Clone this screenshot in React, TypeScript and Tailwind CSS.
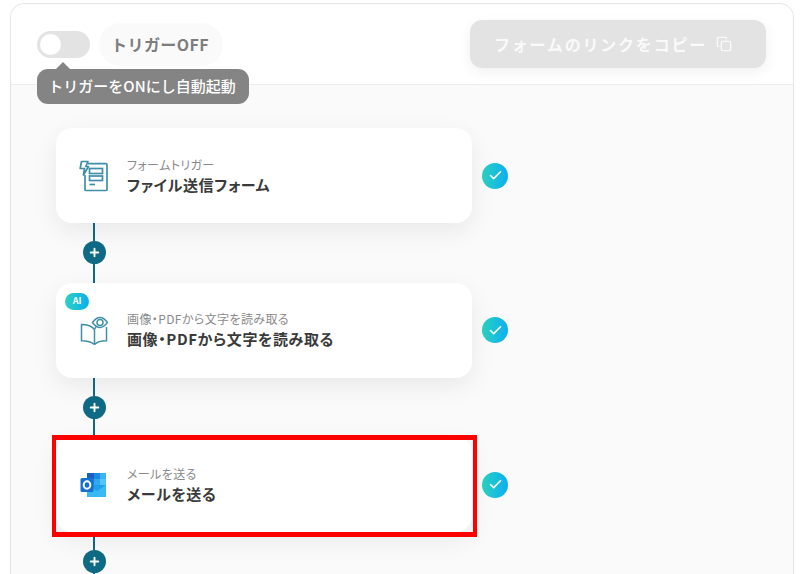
import { Check, Copy, Plus } from "lucide-react";
import type { ReactNode } from "react";

const font = { fontFamily: '"Noto Sans CJK JP", "Noto Sans", sans-serif' };

function FormIcon() {
  return (
    <svg width="30" height="32" viewBox="0 0 30 32" fill="none" stroke="#3f8fa8" strokeWidth="1.700">
      <path d="M9 3.700H27a1 1 0 0 1 1 1V29.500a1 1 0 0 1-1 1H7a1 1 0 0 1-1-1V15" />
      <rect x="10.500" y="8.500" width="13" height="5" />
      <rect x="10.500" y="16" width="13" height="4.500" />
      <path d="M10.500 24.500h5.500" />
      <path d="M2.500 1.500h6.500L6.800 6.500H9.500L4.500 15l1-6.500H1.200z" strokeLinejoin="round" fill="#fff" />
    </svg>
  );
}

function BookIcon() {
  return (
    <svg width="28" height="31" viewBox="0 0 28 31" fill="none" stroke="#3f8fa8" strokeWidth="1.500">
      <path d="M14.500 29.500C11 26.500 6 25.800 1.500 25.800V9.500c5 0 10 1 13 5" />
      <path d="M14.500 29.500c3-3 7-3.700 12-3.700V12" />
      <path d="M14.500 14.500V29.500" />
      <path d="M14.500 14.500c.5-1 1-2 1.500-3" />
      <path d="M12.500 7.500C15 4 17.500 2.500 20 2.500s5 1.500 7.500 5c-2.500 3.500-5 5-7.500 5s-5-1.500-7.500-5z" fill="#fff" />
      <circle cx="20" cy="7.500" r="3" />
    </svg>
  );
}

function OutlookIcon() {
  return (
    <svg width="27" height="26" viewBox="0 0 27 26">
      <rect x="7" y="1" width="19" height="12" fill="#1b8ae0" />
      <rect x="7" y="1" width="7" height="6" fill="#1264c0" />
      <rect x="14" y="1" width="6" height="6" fill="#1b8ae0" />
      <rect x="20" y="1" width="6" height="6" fill="#38b4f0" />
      <rect x="14" y="7" width="6" height="6" fill="#2fa8ee" />
      <rect x="20" y="7" width="6" height="6" fill="#50c4f2" />
      <path d="M7 13h19v12H8a1 1 0 0 1-1-1z" fill="#1f9fea" />
      <path d="M7 13l10 6 9-6v12H8a1 1 0 0 1-1-1z" fill="#38b9f2" />
      <rect x="0.500" y="6" width="13" height="14" rx="1.500" fill="#1570cf" />
      <ellipse cx="7" cy="13" rx="3.300" ry="3.800" fill="none" stroke="#fff" strokeWidth="2" />
    </svg>
  );
}

function Connector() {
  return (
    <div className="ml-[26px] flex h-[59.500px] w-[24px] flex-col items-center">
      <div className="w-[2px] flex-1 bg-[#0f6a85]" />
      <div className="flex h-[23px] w-[23px] items-center justify-center rounded-full bg-[#0f6a85]">
        <Plus size={13} color="#fff" strokeWidth={3.500} />
      </div>
      <div className="w-[2px] flex-1 bg-[#0f6a85]" />
    </div>
  );
}

function Step({
  icon,
  sub,
  title,
  ai,
  highlighted,
}: {
  icon: ReactNode;
  sub: string;
  title: string;
  ai?: boolean;
  highlighted?: boolean;
}) {
  return (
    <div className="flex items-center">
      <div className="relative flex h-[95px] w-[416px] items-center rounded-[16px] bg-white shadow-[0_8px_24px_rgba(0,0,0,0.07)]">
        {ai && (
          <span className="absolute left-[9px] top-[10px] flex h-[17px] w-[24px] items-center justify-center rounded-full bg-gradient-to-r from-[#2dd2bd] to-[#0fadf2] text-[9px] font-bold text-white">
            AI
          </span>
        )}
        <div className="flex w-[71px] justify-center pl-[4px]">{icon}</div>
        <div className="flex flex-col [font-feature-settings:'palt']">
          <span className="text-[12px] leading-[18px] tracking-[0.4px] text-[#8a8a8a]">{sub}</span>
          <span className="text-[15px] font-bold leading-[22px] tracking-[0.6px] text-[#3a3a3a]">{title}</span>
        </div>
        {highlighted && (
          <div className="absolute -bottom-[5px] -left-[4px] -right-[5px] -top-[2px] border-x-[4px] border-y-[5px] border-[#ff0000]" />
        )}
      </div>
      <div className="ml-[10px] flex h-[26px] w-[26px] items-center justify-center rounded-full bg-gradient-to-r from-[#2dd2bd] to-[#0fadf2]">
        <Check size={15} color="#fff" strokeWidth={2.500} />
      </div>
    </div>
  );
}

export default function App() {
  return (
    <div className="h-[574px] overflow-hidden bg-white pl-[10px] pr-[8px] pt-[3px]" style={font}>
      <div className="h-[600px] rounded-t-[14px] border border-[#e5e5e5] bg-[#fafafa]">
        {/* Header */}
        <div className="relative flex h-[81px] items-center justify-between rounded-t-[14px] border-b border-[#ececec] bg-white pl-[26px] pr-[27px]">
          <div className="flex items-center gap-[9px]">
            <div className="flex h-[27px] w-[53px] items-center rounded-full bg-[#e3e3e3] pl-[3px]">
              <div className="h-[21px] w-[21px] rounded-full bg-white" />
            </div>
            <div className="flex h-[43px] w-[124px] items-center justify-center rounded-full bg-[#fafafa] pr-[2px] text-[16px] font-bold tracking-[0.4px] text-[#7d7d7d]">
              トリガーOFF
            </div>
          </div>
          <div className="flex h-[48px] w-[296px] items-center justify-center gap-[9px] rounded-[12px] bg-[#e3e3e3] pr-[10px] text-[16px] font-bold tracking-[1.800px] text-[#fafafa] shadow-[0_4px_14px_rgba(0,0,0,0.06)]">
            フォームのリンクをコピー
            <Copy size={16} color="#fafafa" strokeWidth={2} />
          </div>
          {/* Tooltip */}
          <div className="absolute left-[26px] top-[65px] z-10 flex h-[35px] w-[212px] items-center justify-center rounded-[11px] bg-[#848484] pr-[2px] text-[15px] font-medium text-white">
            <span className="absolute -top-[7px] left-[19px] h-0 w-0 border-b-[7px] border-l-[7px] border-r-[7px] border-b-[#848484] border-l-transparent border-r-transparent" />
            トリガーをONにし自動起動
          </div>
        </div>

        {/* Flow */}
        <div className="pl-[45px] pt-[43px]">
          <Step icon={<FormIcon />} sub="フォームトリガー" title="ファイル送信フォーム" />
          <Connector />
          <Step icon={<BookIcon />} sub="画像・PDFから文字を読み取る" title="画像・PDFから文字を読み取る" ai />
          <Connector />
          <Step icon={<OutlookIcon />} sub="メールを送る" title="メールを送る" highlighted />
          <Connector />
        </div>
      </div>
    </div>
  );
}
